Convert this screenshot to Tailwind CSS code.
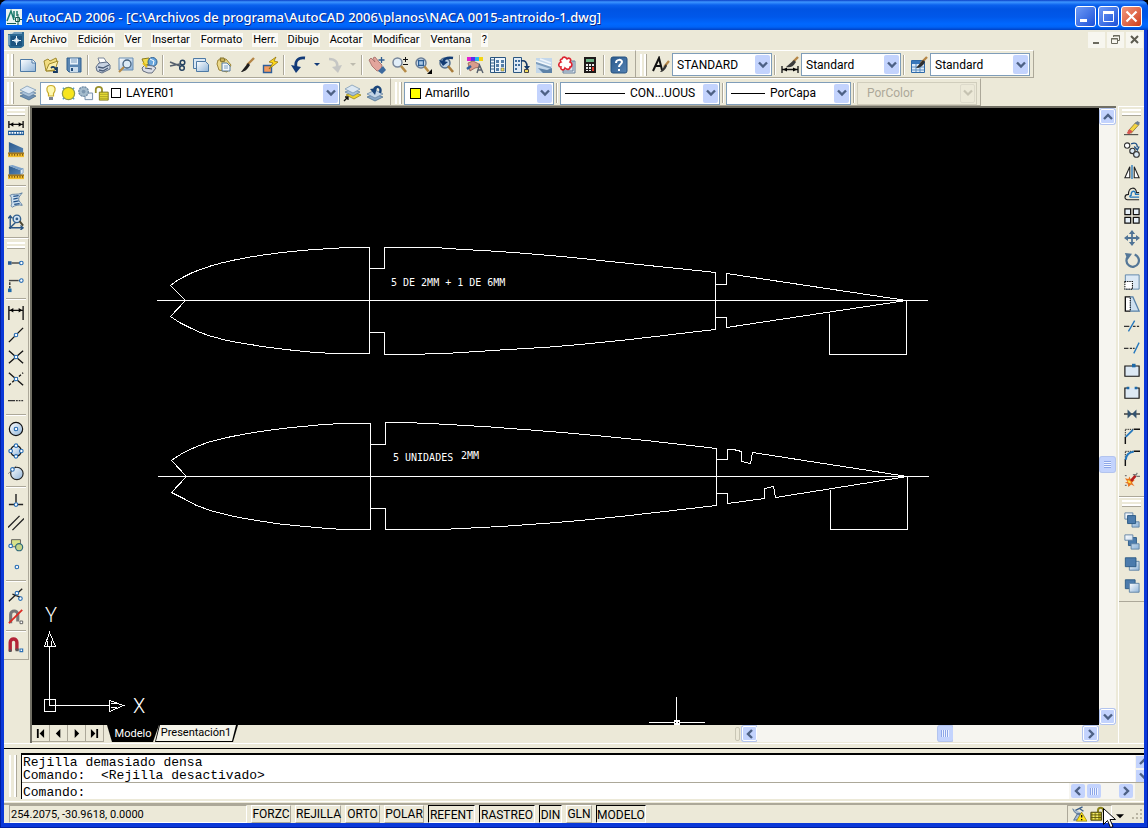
<!DOCTYPE html>
<html lang="es">
<head>
  <meta charset="UTF-8">
  <meta name="viewport" content="width=device-width, initial-scale=1.0">
  <title>AutoCAD 2006 - [C:\Archivos de programa\AutoCAD 2006\planos\NACA 0015-antroido-1.dwg]</title>
  <script src="https://cdn.jsdelivr.net/npm/@tailwindcss/browser@4"></script>
</head>
<body class="h-screen overflow-hidden bg-black font-['Roboto',sans-serif] text-xs text-black">

  <!-- Icon set, 18x18 -->
  <svg width="0" height="0" class="absolute" aria-hidden="true">
    <defs>
      <linearGradient id="sky" x1="0" y1="0" x2="1" y2="1"><stop offset="0" stop-color="#fff"/><stop offset="1" stop-color="#8fb4d8"/></linearGradient>
      <linearGradient id="steel" x1="0" y1="0" x2="1" y2="1"><stop offset="0" stop-color="#2b5a8d"/><stop offset="1" stop-color="#5583b3"/></linearGradient>
    </defs>
    <symbol id="down" viewBox="0 0 10 10"><path d="M1 2.500l4 4 4-4" fill="none" stroke="#4d6185" stroke-width="2.400"/></symbol>
    <symbol id="up" viewBox="0 0 10 10"><path d="M1 7l4-4 4 4" fill="none" stroke="#4d6185" stroke-width="2.400"/></symbol>
    <symbol id="left" viewBox="0 0 10 10"><path d="M7 1L3 5l4 4" fill="none" stroke="#4d6185" stroke-width="2.400"/></symbol>
    <symbol id="right" viewBox="0 0 10 10"><path d="M3 1l4 4-4 4" fill="none" stroke="#4d6185" stroke-width="2.400"/></symbol>
    <symbol id="off" viewBox="0 0 10 10"><path d="M1 2.500l4 4 4-4" fill="none" stroke="#c6c3b2" stroke-width="2.200"/></symbol>
    <symbol id="tri" viewBox="0 0 6 6"><path d="M0 1h6L3 4z"/></symbol>
    <symbol id="node" viewBox="0 0 6 6"><circle cx="3" cy="3" r="2" fill="#fff" stroke="#2a6fb5" stroke-width="1.300"/></symbol>

    <symbol id="new" viewBox="0 0 18 18"><path d="M1.500 3.500h12l3 3v9h-15z" fill="url(#sky)" stroke="#4e7aa5"/><path d="M13 3.500v3.500h3.500" fill="#fff" stroke="#4e7aa5"/></symbol>
    <symbol id="open" viewBox="0 0 18 18"><path d="M2 5l4-2 2 2 6-3 1 4-3 9H4z" fill="#f1dc80" stroke="#a08a2c"/><path d="M4 15l3-7 9-3-3 9z" fill="#fbeea8" stroke="#a08a2c"/><path d="M9 12c2-2 4-1 5 2M15 11v5h-4" fill="none" stroke="#173a63" stroke-width="1.800"/></symbol>
    <symbol id="save" viewBox="0 0 18 18"><path d="M2 2h14v14H4l-2-2z" fill="#5b87b3" stroke="#2f5f90"/><path d="M5 2.500h8v6H5z" fill="#e8f2fb"/><path d="M6 4h6M6 6h6" stroke="#7d9fc0"/><path d="M5 11h8v5H5z" fill="#c9dced"/><path d="M6 12h2v3H6z" fill="#234e7c"/></symbol>
    <symbol id="print" viewBox="0 0 18 18"><path d="M6 8L4 2h6l3 5" fill="#fff" stroke="#7a8699"/><path d="M2 11l3-4 8-1 3 3v4l-8 4-5-2z" fill="#c8d3e2" stroke="#5d6c84"/><path d="M4 11l5 1 6-3M5 14l4 1 5-3" fill="none" stroke="#4b5d78" stroke-width="1.300"/></symbol>
    <symbol id="preview" viewBox="0 0 18 18"><path d="M2 2h14v12H2z" fill="url(#sky)" stroke="#6a8fb4"/><circle cx="10" cy="8" r="4" fill="#dcebf7" stroke="#45627f" stroke-width="1.300"/><path d="M7 11l-5 5" stroke="#b58b4a" stroke-width="2.200"/></symbol>
    <symbol id="publish" viewBox="0 0 18 18"><path d="M2 3l7-1 3 4-7 4z" fill="#f3dc4c" stroke="#8a7b1d"/><circle cx="12.500" cy="6" r="4.500" fill="#68a6dc" stroke="#2c5f93"/><path d="M10 3l4 2-1 4" stroke="#fff" fill="none"/><path d="M2 12l3-3 8 1 3 2-4 5-4 0-5-2z" fill="#d9dde6" stroke="#666f80"/><path d="M5 12l7 1" stroke="#3f4a5c"/><path d="M3 7l4 4" stroke="#e7c21b" stroke-width="2"/></symbol>
    <symbol id="cut" viewBox="0 0 18 18"><path d="M1 6l10 4M1 10l10-2" stroke="#55606e" stroke-width="1.600"/><circle cx="13.500" cy="6.500" r="2.300" fill="none" stroke="#24405f" stroke-width="1.500"/><circle cx="13" cy="12" r="2.300" fill="none" stroke="#24405f" stroke-width="1.500"/></symbol>
    <symbol id="copy" viewBox="0 0 18 18"><path d="M1.500 2.500h12v10h-12z" fill="#dbe8f4" stroke="#4e7aa5"/><path d="M4.500 5.500h9l3 3v7h-12z" fill="url(#sky)" stroke="#4e7aa5"/></symbol>
    <symbol id="paste" viewBox="0 0 18 18"><path d="M3 4l8-1 5 6-4 7-8-2-2-6z" fill="#ecd98a" stroke="#9c8536"/><path d="M5 2h4l1 3-4 1z" fill="#c9b25a" stroke="#82702a"/><path d="M7 7h5l3 3v5H7z" fill="#f2f7fc" stroke="#54789c"/><path d="M9 10h4M9 12h4" stroke="#7fa0c0"/></symbol>
    <symbol id="brush" viewBox="0 0 18 18"><path d="M16 2L9 9" stroke="#b48546" stroke-width="2.400"/><path d="M10 7L3 16c3 0 6-2 9-7z" fill="#1d1d1d"/></symbol>
    <symbol id="block" viewBox="0 0 18 18"><path d="M2.500 9.500h8v7h-8z" fill="#f19a5f" stroke="#2d5f9b" stroke-width="1.400"/><path d="M15 1L8 6l4 1-4 6 9-7-4-1z" fill="#ffd91c" stroke="#8a6a00" stroke-width=".7"/></symbol>
    <symbol id="undo" viewBox="0 0 18 18"><path d="M15 2C7 1 5 6 6 11" fill="none" stroke="#123a78" stroke-width="2.800"/><path d="M1 9l5 8 5-6z" fill="#123a78"/></symbol>
    <symbol id="redo" viewBox="0 0 18 18"><path d="M3 3c7 0 9 4 8 8" fill="none" stroke="#c5c6c4" stroke-width="2.600"/><path d="M6 11l6 6 4-8z" fill="#c5c6c4"/></symbol>
    <symbol id="pan" viewBox="0 0 18 18"><path d="M1 4l2-2 4 4-2-4 2-1 4 5 3 3-1 5-4 1-5-5z" fill="#e2a59c" stroke="#a06662" stroke-width=".8"/><path d="M10 15l5-5 3 4-4 4z" fill="#3d6a9e"/><path d="M13.500 1v6M10.500 4h6" stroke="#2f5c90" stroke-width="1.300"/></symbol>
    <symbol id="zoomrt" viewBox="0 0 18 18"><circle cx="6.500" cy="6.500" r="4.500" fill="#e2eef8" stroke="#77869a" stroke-width="1.500"/><path d="M10 10l5 6" stroke="#b68b46" stroke-width="2.600"/><path d="M14.500 1v5M12 3.500h5M12 8.500h5" stroke="#111"/></symbol>
    <symbol id="zoomwin" viewBox="0 0 18 18"><circle cx="7" cy="7" r="5" fill="#e2eef8" stroke="#6a7d95" stroke-width="1.500"/><path d="M4.500 4.500h5v5h-5z" fill="#a9c7e4" stroke="#2b5d94" stroke-width="1.300"/><path d="M10.500 10.500l4 5" stroke="#b68b46" stroke-width="2.400"/><path d="M18 13v5h-5z"/></symbol>
    <symbol id="zoomprev" viewBox="0 0 18 18"><circle cx="8" cy="7" r="5" fill="#bfd4e8" stroke="#56718e" stroke-width="1.500"/><path d="M11 10l5 6" stroke="#a97d3c" stroke-width="2.600"/><path d="M16 2C10 1 7 3 6 6" fill="none" stroke="#133c74" stroke-width="2.400"/><path d="M2 4l4 6 5-4z" fill="#133c74"/></symbol>
    <symbol id="props" viewBox="0 0 18 18"><path d="M1 1h4v4H1z" fill="#e11fd0"/><path d="M5 1h4v4H5z" fill="#5a2ef0"/><path d="M9 1h4v4H9z" fill="#22b8e8"/><path d="M13 1h4v4h-4z" fill="#f3d512"/><path d="M2 7l5-2 6 3 1 3-5 1-5 3z" fill="#d99c8c" stroke="#895b52" stroke-width=".8"/><path d="M1 13l4-3" stroke="#2d5fa0" stroke-width="2.500"/><path d="M11 17l2.500-8L17 17M12 14h4" fill="none" stroke="#57606e" stroke-width="1.400"/></symbol>
    <symbol id="center" viewBox="0 0 18 18"><path d="M1.500 1.500h15v15h-15z" fill="#eef5fb" stroke="#2b5680"/><path d="M5.500 1.500v15" stroke="#2b5680"/><path d="M7 4h3v3H7zM12 4h3v3h-3zM7 8h3v3H7zM7 12h3v3H7zM12 8h3v3h-3z" fill="#547ea8"/><path d="M12 12h3v3h-3z" fill="#f2e159" stroke="#444" stroke-width=".5"/><path d="M2 4h3M2 7h3M2 10h3M2 13h3" stroke="#2b5680"/></symbol>
    <symbol id="palettes" viewBox="0 0 18 18"><path d="M1.500 1.500h8v15h-8z" fill="#dfeaf5" stroke="#2b5680"/><path d="M3 4h2v2H3zM6 4h2v2H6zM3 8h2v2H3zM6 8h2v2H6zM3 12h2v2H3z" fill="#3e6d9d"/><path d="M9 5c4-1 6 1 6 6" fill="none" stroke="#163a68" stroke-width="1.600"/><path d="M12 10h6l-3 4z" fill="#163a68"/><path d="M12.500 13.500h4v3h-4z" fill="#f1d95e" stroke="#444"/></symbol>
    <symbol id="sheets" viewBox="0 0 18 18"><path d="M1 2h16v15H1z" fill="#c3d7ea"/><path d="M1 5l15 5v3L1 8z" fill="#7f9fbe"/><path d="M1 5l15 5" stroke="#f3f8fc" stroke-width="1.500"/><path d="M3 12l9 2 5-2v5H8z" fill="#5d82a7"/><path d="M5 3l11 4" stroke="#eef5fb" stroke-width="1.500"/></symbol>
    <symbol id="markup" viewBox="0 0 18 18"><path d="M7 5h10v12H5v-4" fill="#dce6f0" stroke="#69809a"/><path d="M5 15h10V5" fill="none" stroke="#69809a"/><path d="M4 3c1-3 4-2 5 0 2-2 5 0 3 3 3 1 2 5 0 5 0 3-3 3-5 1-1 3-5 2-4-1-3 0-3-4 0-5-1-1-1-3 1-3z" fill="#fff" stroke="#dc2430" stroke-width="1.600"/></symbol>
    <symbol id="calc" viewBox="0 0 18 18"><path d="M3 1h12v16H3z" fill="#1e1a1a"/><path d="M5 3h8v3H5z" fill="#70b488"/><path d="M5 8h2v2H5zM8 8h2v2H8zM11 8h2v2h-2zM5 11h2v2H5zM8 11h2v2H8zM5 14h2v1H5zM8 14h2v1H8z" fill="#eee"/><path d="M11 11h2v4h-2z" fill="#e23b2e"/></symbol>
    <symbol id="help" viewBox="0 0 18 18"><rect x="1" y="1" width="16" height="16" rx="2" fill="url(#steel)" stroke="#24507f"/><path d="M6 7c0-4 6-4 6-1 0 2-3 2-3 5M9 13v2" fill="none" stroke="#fff" stroke-width="2"/></symbol>
    <symbol id="textstyle" viewBox="0 0 18 18"><path d="M1 15L7 2l3 12M4 10h5" fill="none" stroke="#111" stroke-width="2"/><path d="M17 5l-5 6" stroke="#b48546" stroke-width="2.200"/><path d="M14 8l-6 8c3 0 5-2 7-6z" fill="#333"/></symbol>
    <symbol id="dimstyle" viewBox="0 0 18 18"><path d="M1 10v7M17 10v7M1 13.500h16" stroke="#111" stroke-width="1.300"/><path d="M2 13.500l4-2v4zM16 13.500l-4-2v4z"/><path d="M17 1l-5 5" stroke="#b48546" stroke-width="2.400"/><path d="M13 4l-8 7c4 1 7 0 10-5z" fill="#3b3b3b"/></symbol>
    <symbol id="tablestyle" viewBox="0 0 18 18"><path d="M1.500 4.500h13v12h-13z" fill="#dceaf7" stroke="#2e69a8"/><path d="M2 5h12v3H2z" fill="#3877bb"/><path d="M2 11h12M2 14h12M6 8v8M10 8v8" stroke="#5a8dc2"/><path d="M17 1l-6 6" stroke="#b48546" stroke-width="2.400"/><path d="M13 4l-7 8c4 0 7-2 9-6z" fill="#2f2f2f"/></symbol>
    <symbol id="layers" viewBox="0 0 18 18"><path d="M1 12l9 4 7-4-9-3z" fill="#6d8fb3" stroke="#426789" stroke-width=".7"/><path d="M1 9l9 4 7-4-9-3z" fill="#a9c1d9" stroke="#5d7c9c" stroke-width=".7"/><path d="M1 6l9 4 7-4-9-4z" fill="#dce8f3" stroke="#7190af" stroke-width=".7"/></symbol>
    <symbol id="layercur" viewBox="0 0 18 18"><path d="M3 11l8 4 7-4-8-3z" fill="#f0d42c" stroke="#8c7b14" stroke-width=".7"/><path d="M2 8l8 4 7-4-8-3z" fill="#a9c1d9" stroke="#5d7c9c" stroke-width=".7"/><path d="M2 5l8 4 7-4-8-4z" fill="#dce8f3" stroke="#7190af" stroke-width=".7"/><path d="M1 17l4-4M2 13h3v3" fill="none" stroke="#111" stroke-width="1.300"/></symbol>
    <symbol id="layerprev" viewBox="0 0 18 18"><path d="M1 13l8 4 8-4-8-3z" fill="#8aa8c8" stroke="#426789" stroke-width=".7"/><path d="M1 10l8 4 8-4-8-4z" fill="#c3d5e7" stroke="#5d7c9c" stroke-width=".7"/><path d="M14 9c2-6-3-8-6-4" fill="none" stroke="#1b467b" stroke-width="2.400"/><path d="M4 5l5 6 2-7z" fill="#1b467b"/></symbol>
    <symbol id="bulb" viewBox="0 0 18 18"><path d="M9 1.500c5 0 5 5 2.500 8V12h-5V9.500C4 6.500 4 1.500 9 1.500z" fill="#fff9b0" stroke="#c9aa28" stroke-width="1.200"/><path d="M7 13h4v3H7z" fill="#7d8590"/></symbol>
    <symbol id="sun" viewBox="0 0 18 18"><path d="M3 3l12 12M15 3L3 15" stroke="#4e9bd4" stroke-width="1.400"/><circle cx="9" cy="9" r="6.500" fill="#f7e51d" stroke="#8f9a4a" stroke-width="1.300"/></symbol>
    <symbol id="vp" viewBox="0 0 18 18"><path d="M8.500 8.500h8v7h-8z" fill="#eef3f8" stroke="#6e8aa8"/><circle cx="7" cy="7" r="5.500" fill="#a5bccd"/><circle cx="7" cy="7" r="5" fill="none" stroke="#7690a8" stroke-width="1.500" stroke-dasharray="2 1"/><circle cx="7" cy="7" r="2" fill="#7c97b0"/></symbol>
    <symbol id="lock" viewBox="0 0 18 18"><path d="M2 9V5c0-4 7-4 7 0v4" fill="none" stroke="#98902a" stroke-width="2"/><path d="M6 8h10v9H6z" fill="#e7dc35" stroke="#79711a"/><path d="M6 10.500h10M6 13h10M6 15h10" stroke="#a09724" stroke-width=".8"/></symbol>

    <symbol id="dist" viewBox="0 0 18 18"><path d="M1 1v8M17 1v8M1 5h16" stroke="#111" stroke-width="1.500"/><path d="M2 5l4-2.500v5zM16 5l-4-2.500v5z"/><path d="M0 12h18v5H0z" fill="#1d5a97"/><path d="M1 14.500h16" stroke="#fff" stroke-width="2" stroke-dasharray="2 1"/></symbol>
    <symbol id="area" viewBox="0 0 18 18"><path d="M1 0l16 7v5H1z" fill="url(#steel)"/><path d="M0 12h18v5H0z" fill="#f0bd2c"/><path d="M0 12.500h18" stroke="#5f3e12"/><path d="M1 14.500h16" stroke="#5f3e12" stroke-width="2" stroke-dasharray="1 2"/></symbol>
    <symbol id="mass" viewBox="0 0 18 18"><path d="M1 2l13 5v5H1z" fill="url(#steel)"/><path d="M1 2l4-1 12 4-3 2z" fill="#7ba2ca"/><path d="M14 7l3-2v5l-3 2z" fill="#dce8f3" stroke="#5583b3" stroke-width=".7"/><path d="M0 12h18v5H0z" fill="#f0bd2c"/><path d="M0 12.500h18" stroke="#5f3e12"/><path d="M1 14.500h16" stroke="#5f3e12" stroke-width="2" stroke-dasharray="1 2"/></symbol>
    <symbol id="list" viewBox="0 0 18 18"><path d="M2 4c3-3 9 0 14-3-2 3-4 4-4 7s3 4 4 7c-4-1-8 0-11 2-3-1 0-3-1-6S5 6 2 4z" fill="#cfe0ef" stroke="#56799c"/><path d="M6 5l6-1M6 8l5-1M6 11l6-1M7 14l6-1" stroke="#1e4f86" stroke-width="1.400"/></symbol>
    <symbol id="idpt" viewBox="0 0 18 18"><path d="M2.500 17V3M1 15.500h15M0 5l2.500-3L5 5M14 13l3 2.500-3 2.500M3 15l6-6" fill="none" stroke="#2a5583" stroke-width="1.500"/><circle cx="10" cy="5.500" r="4.200" fill="#d5e6f5" stroke="#33618f" stroke-width="1.600"/><circle cx="10" cy="5.500" r="1.600" fill="#33618f"/><path d="M13 8l4 5" stroke="#4c4632" stroke-width="2.200"/></symbol>
    <symbol id="track" viewBox="0 0 18 18"><path d="M0 7h4v4H0z" fill="#2d5f93"/><path d="M4 9h9" stroke="#444" stroke-width="1.600"/><use href="#node" x="12" y="6" width="6" height="6"/></symbol>
    <symbol id="from" viewBox="0 0 18 18"><path d="M2 13V5" stroke="#333" stroke-width="1.600" stroke-dasharray="3 1"/><path d="M1 4h11" stroke="#444" stroke-width="1.600"/><path d="M0 13h4v4H0z" fill="#1d69a8"/><use href="#node" x="12" y="1" width="6" height="6"/></symbol>
    <symbol id="endp" viewBox="0 0 18 18"><path d="M1 1v16M17 1v16M1 6h16" stroke="#111" stroke-width="1.500"/><path d="M2 6l4-2.500v5zM16 6l-4-2.500v5z"/></symbol>
    <symbol id="mid" viewBox="0 0 18 18"><path d="M1 17L17 1" stroke="#111" stroke-width="1.500"/><use href="#node" x="6" y="6" width="6" height="6"/></symbol>
    <symbol id="inter" viewBox="0 0 18 18"><path d="M1 2l16 14M1 16L17 2" stroke="#111" stroke-width="1.500"/><use href="#node" x="6" y="6" width="6" height="6"/></symbol>
    <symbol id="appint" viewBox="0 0 18 18"><path d="M1 2l16 14" stroke="#111" stroke-width="1.500"/><path d="M1 16L17 2" stroke="#111" stroke-width="1.500" stroke-dasharray="3 2"/><use href="#node" x="6" y="6" width="6" height="6"/></symbol>
    <symbol id="ext" viewBox="0 0 18 18"><path d="M0 8.500h8M9 8.500h2M12 8.500h2M15 8.500h2" stroke="#333" stroke-width="1.500"/></symbol>
    <symbol id="cen" viewBox="0 0 18 18"><circle cx="9" cy="9" r="7.500" fill="url(#sky)" stroke="#111" stroke-width="1.300"/><use href="#node" x="6" y="6" width="6" height="6"/></symbol>
    <symbol id="quad" viewBox="0 0 18 18"><circle cx="9" cy="9" r="6" fill="url(#sky)" stroke="#111" stroke-width="1.300"/><use href="#node" x="6" y="0" width="6" height="6"/><use href="#node" x="6" y="12" width="6" height="6"/><use href="#node" x="0" y="6" width="6" height="6"/><use href="#node" x="12" y="6" width="6" height="6"/></symbol>
    <symbol id="tan" viewBox="0 0 18 18"><circle cx="10" cy="9.500" r="7" fill="url(#sky)" stroke="#222" stroke-width="1.300"/><path d="M0 10l9-9" stroke="#777"/><use href="#node" x="2" y="2" width="6" height="6"/></symbol>
    <symbol id="perp" viewBox="0 0 18 18"><path d="M9 1v10M1 13h16" stroke="#222" stroke-width="1.600"/><use href="#node" x="6" y="10" width="6" height="6"/></symbol>
    <symbol id="para" viewBox="0 0 18 18"><path d="M0 14L13 1M5 17L18 4" stroke="#222" stroke-width="1.500"/></symbol>
    <symbol id="ins" viewBox="0 0 18 18"><path d="M4 3h10v8H4z" fill="#d9e28a" stroke="#555"/><circle cx="12.500" cy="11.500" r="4" fill="#c3d389" stroke="#2e6a7a" stroke-width="1.300"/><use href="#node" x="0" y="7" width="6" height="6"/></symbol>
    <symbol id="nodept" viewBox="0 0 18 18"><use href="#node" x="7" y="6" width="6" height="6"/></symbol>
    <symbol id="near" viewBox="0 0 18 18"><path d="M1 16L16 2M5 8l10 4" stroke="#222" stroke-width="1.500"/><use href="#node" x="7" y="4" width="6" height="6"/><use href="#node" x="11" y="10" width="6" height="6"/></symbol>
    <symbol id="none" viewBox="0 0 18 18"><path d="M3 16V6c0-5 8-5 8 0v8" fill="none" stroke="#777" stroke-width="3.500"/><path d="M1 16L16 1" stroke="#dd2a22" stroke-width="2"/><path d="M13.500 13.500h3v3h-3z" fill="#fff" stroke="#555"/></symbol>
    <symbol id="magnet" viewBox="0 0 18 18"><path d="M2.500 16V6c0-5 7.500-5 7.500 0v9" fill="none" stroke="#b32336" stroke-width="3.800"/><path d="M1 14h3v3H1zM8.500 13h3.500v3H8.500z" fill="#555"/><path d="M13.500 13.500h3v3h-3z" fill="#fff" stroke="#2a6fb5" stroke-width="1.300"/></symbol>

    <symbol id="erase" viewBox="0 0 18 18"><path d="M0 16.500h16" stroke="#222"/><path d="M5 12L13 3l4 2-9 10z" fill="#f4d543" stroke="#77652a" stroke-width=".8"/><path d="M3 15l3-5 4 3-4 3z" fill="#d85852"/><path d="M12 4l3-3 3 2-2 3z" fill="#6c7f96"/></symbol>
    <symbol id="cp" viewBox="0 0 18 18"><circle cx="3.500" cy="4" r="3" fill="#fff" stroke="#333" stroke-width="1.300"/><circle cx="9.500" cy="10" r="3" fill="#dce9f4" stroke="#333" stroke-width="1.300"/><circle cx="14" cy="14" r="3.200" fill="#dce9f4" stroke="#333" stroke-width="1.300"/><path d="M8 2c5-2 7 0 7 4M11.500 5l3.500 4 2-4" fill="none" stroke="#1c4f86" stroke-width="1.500"/></symbol>
    <symbol id="mirror" viewBox="0 0 18 18"><path d="M6.500 3v12.500H1z" fill="#fff" stroke="#222" stroke-width="1.200"/><path d="M11.500 3v12.500H17z" fill="#fff" stroke="#222" stroke-width="1.200"/><path d="M9 1v16" stroke="#2377bd" stroke-width="1.500"/></symbol>
    <symbol id="offset" viewBox="0 0 18 18"><path d="M17 15.500H4c-4 0-4-6 1-6 0-9 9-9 9-2h3" fill="none" stroke="#222" stroke-width="1.300"/><path d="M17 12.500H7c-1-1 0-2 1-2 0-6 5-6 5-1h4" fill="none" stroke="#2377bd" stroke-width="1.500"/></symbol>
    <symbol id="array" viewBox="0 0 18 18"><path d="M1 1h6.500v6.500H1zM10.500 1H17v6.500h-6.500zM1 10.500h6.500V17H1zM10.500 10.500H17V17h-6.500z" fill="#e6f0f8" stroke="#111" stroke-width="1.400"/></symbol>
    <symbol id="move" viewBox="0 0 18 18"><path d="M9 2v14M2 9h14" stroke="#4f7395" stroke-width="2"/><path d="M9 0l3.500 4.500h-7zM9 18l3.500-4.500h-7zM0 9l4.500-3.500v7zM18 9l-4.500-3.500v7z" fill="#4f7395"/></symbol>
    <symbol id="rotate" viewBox="0 0 18 18"><path d="M5 4.500A7 7 0 1 0 12 3" fill="none" stroke="#547797" stroke-width="2.500"/><path d="M1 1l8 1-5 7z" fill="#547797"/></symbol>
    <symbol id="scale" viewBox="0 0 18 18"><path d="M1.500 1h15.500v16H1.500z" fill="#dce9f5" stroke="#5580a8"/><path d="M1 8.500h8.500V17H1z" fill="#fff" stroke="#111" stroke-width="1.200" stroke-dasharray="1.500 1"/></symbol>
    <symbol id="stretch" viewBox="0 0 18 18"><path d="M7 1h3l7 16H7z" fill="#cfe0ef" stroke="#5580a8" stroke-width="1.400"/><path d="M7 1H1.500v16H7" fill="#fff" stroke="#111" stroke-width="1.500"/><path d="M7 2v15" stroke="#111" stroke-width="1.200" stroke-dasharray="1.500 1"/></symbol>
    <symbol id="trim" viewBox="0 0 18 18"><path d="M0 9.500h6M10 9.500h3M14.500 9.500H17" stroke="#333" stroke-width="1.500"/><path d="M5 15L12 3" stroke="#2377bd" stroke-width="1.500"/></symbol>
    <symbol id="extend" viewBox="0 0 18 18"><path d="M0 9.500h5M6.500 9.500H9M10 9.500h2" stroke="#333" stroke-width="1.500"/><path d="M11 15L17 3" stroke="#2377bd" stroke-width="1.500"/></symbol>
    <symbol id="break1" viewBox="0 0 18 18"><path d="M1 4.500h16V16H1z" fill="#dde9f4" stroke="#111" stroke-width="1.300"/><path d="M9 2h4v4H9z" fill="#1d69a8"/></symbol>
    <symbol id="break2" viewBox="0 0 18 18"><path d="M5 4.500H1V16h16V4.500h-4" fill="#dde9f4" stroke="#111" stroke-width="1.300"/><path d="M3 3h3v3H3zM12 3h3v3h-3z" fill="#1d69a8"/></symbol>
    <symbol id="join" viewBox="0 0 18 18"><path d="M0 9h18" stroke="#333" stroke-width="1.600"/><path d="M4 4l5 5-5 5zM14 4L9 9l5 5z" fill="#33536f"/></symbol>
    <symbol id="chamfer" viewBox="0 0 18 18"><path d="M1.500 1.500h10M1.500 2v8" stroke="#111" stroke-dasharray="1.500 1"/><path d="M11 1.500h7M1.500 10v8" stroke="#111" stroke-width="1.600"/><path d="M2 10l8-8" stroke="#2377bd" stroke-width="2"/></symbol>
    <symbol id="fillet" viewBox="0 0 18 18"><path d="M1.500 1.500h10M1.500 2v8" stroke="#111" stroke-dasharray="1.500 1"/><path d="M11 1.500h7M1.500 10v8" stroke="#111" stroke-width="1.600"/><path d="M2 11c0-5 4-9 9-9" fill="none" stroke="#2377bd" stroke-width="2.400"/></symbol>
    <symbol id="explode" viewBox="0 0 18 18"><path d="M1 7l4 1 1-3 2 4 4 0-3 3 3 4-4-2-3 3-1-4-3-1 3-1z" fill="#e8731e"/><path d="M4 9l3 1 1 3-3-1z" fill="#ffe34a"/><path d="M8 10l5-6" stroke="#b51f1f" stroke-width="3"/><path d="M13 4l2-3M14 5h4M10 3h3M1 4h2M1 15h2" stroke="#777" stroke-width="1.300"/></symbol>
    <symbol id="front" viewBox="0 0 18 18"><path d="M1 1h9v7H1zM9 11h8v6H9z" fill="url(#sky)" stroke="#5a7fa3"/><path d="M4 4h9v9H4z" fill="#4b7bac" stroke="#285782"/></symbol>
    <symbol id="back" viewBox="0 0 18 18"><path d="M5 4h9v9H5z" fill="#4b7bac" stroke="#285782"/><path d="M1 1h9v6H1zM8 11h9v6H8z" fill="url(#sky)" stroke="#5a7fa3"/></symbol>
    <symbol id="above" viewBox="0 0 18 18"><path d="M6 6h11v10H6z" fill="url(#sky)" stroke="#5a7fa3"/><path d="M1.500 2h12v10h-12z" fill="#4b7bac" stroke="#285782"/></symbol>
    <symbol id="under" viewBox="0 0 18 18"><path d="M1.500 2h11v10h-11z" fill="#4b7bac" stroke="#285782"/><path d="M6 6h11v10H6z" fill="url(#sky)" stroke="#5a7fa3"/></symbol>
    <symbol id="comm" viewBox="0 0 18 18"><path d="M2 3c2 6 6 7 10 5M3 16l4-7h3l2 6z" fill="#a9bcd2" stroke="#466487"/><path d="M5 5l8-4M10 3l4 3" stroke="#3b5f8b" stroke-width="1.500"/><path d="M12 7l6 10H6z" fill="#ffe41c" stroke="#8a7a0c" stroke-width=".8"/><path d="M12 10v3M12 14.500V16" stroke="#111" stroke-width="1.500"/></symbol>
    <symbol id="padlock" viewBox="0 0 18 18"><path d="M9 7V5c0-4 6-4 6 0v2" fill="none" stroke="#8b8418" stroke-width="2.200"/><path d="M1 7h12v9H1z" fill="#b3a91e" stroke="#3f3b08"/><path d="M4 8v7M8 8v7" stroke="#f5ee7c" stroke-width="2"/><path d="M1 10h12M1 13h12" stroke="#544f0d"/></symbol>
  </svg>

  <div class="flex h-full flex-col rounded-t-lg bg-[#0a38d8] px-1 pb-[5px] shadow-[inset_1px_-1px_0_#001ea0,inset_-1px_-1px_0_#001ea0]">

    <!-- Title bar -->
    <header class="-mx-1 flex h-[30px] shrink-0 items-center rounded-t-lg bg-[linear-gradient(#0a3fc8_0,#3d95ff_2px,#0b62ee_5px,#0054e3_9px,#0058ea_17px,#0068ff_24px,#0063f6_27px,#0041c4_30px)] pt-[3px] pr-[6px] pl-[6px]">
      <svg class="size-4 shrink-0" viewBox="0 0 16 16"><path d="M0 0h16v16H0z" fill="#e9f3f1"/><path d="M1 12L5 2l3 9M8 2v7M11 2v5" fill="none" stroke="#1b7a6c" stroke-width="1.500"/><path d="M9.500 8.500h4v4h-4zM12 5v11M1 14.500h9M13 10.500h3" fill="none" stroke="#145a50"/></svg>
      <h1 class="ml-1 flex-1 truncate font-['Noto_Sans',sans-serif] text-[13px] leading-5 font-medium text-white [text-shadow:1px_1px_#0a2a8a]">AutoCAD 2006 - [C:\Archivos de programa\AutoCAD 2006\planos\NACA 0015-antroido-1.dwg]</h1>
      <div class="flex gap-[2px] [&>button]:size-[21px] [&>button]:rounded-[3px] [&>button]:border [&>button]:border-white [&_svg]:size-full">
        <button aria-label="Minimizar" class="bg-linear-to-br from-[#6f9af5] to-[#1c4fd8]"><svg viewBox="0 0 19 19"><path d="M4 12h7v3H4z" fill="#fff"/></svg></button>
        <button aria-label="Maximizar" class="bg-linear-to-br from-[#6f9af5] to-[#1c4fd8]"><svg viewBox="0 0 19 19"><path d="M4.500 5.500h10v9h-10z" fill="none" stroke="#fff"/><path d="M4 4h11v3H4z" fill="#fff"/></svg></button>
        <button aria-label="Cerrar" class="bg-linear-to-br from-[#f0967c] to-[#cf3a12]"><svg viewBox="0 0 19 19"><path d="M4.500 4.500l10 10M14.500 4.500l-10 10" stroke="#fff" stroke-width="2.200"/></svg></button>
      </div>
    </header>

    <div class="flex min-h-0 flex-1 flex-col bg-[#ece9d8]">

      <!-- Menu bar -->
      <nav class="flex h-5 shrink-0 items-center pb-px pl-1">
        <svg class="mr-[5px] size-4" viewBox="0 0 16 16"><path d="M0 2h4l2-2h10v14l-3 2H2L0 13z" fill="#2c6a93"/><path d="M3 4h11v10H3z" fill="#1c5480"/><path d="M8.500 4v9M4 8.500h9M7 7h3v3H7z" stroke="#eaf4fb" fill="none"/><path d="M1 3v10M2 1h12" stroke="#b6d2e5"/></svg>
        <div class="flex gap-[9px] text-[11px] leading-[14px] [&>button]:bg-[#fbfaf5] [&>button]:px-px">
          <button>Archivo</button><button>Edición</button><button>Ver</button><button>Insertar</button><button>Formato</button><button>Herr.</button><button>Dibujo</button><button>Acotar</button><button>Modificar</button><button>Ventana</button><button>?</button>
        </div>
        <div class="ml-auto flex gap-[2px] pr-[1px] [&>button]:h-4 [&>button]:w-[17px] [&>button]:bg-[#f7f6ef] [&_svg]:mx-auto [&_svg]:size-[11px]">
          <button aria-label="Minimizar dibujo"><svg viewBox="0 0 11 11"><path d="M2 8h6v2H2z" fill="#6b6a5e"/></svg></button>
          <button aria-label="Restaurar dibujo"><svg viewBox="0 0 11 11"><path d="M3.500 3V1.500h6v5H8M1.500 4.500h6v5h-6zM1 5h7M3 2h7" fill="none" stroke="#6b6a5e"/></svg></button>
          <button aria-label="Cerrar dibujo"><svg viewBox="0 0 11 11"><path d="M2 2l7 7M9 2l-7 7" stroke="#5c5b50" stroke-width="2"/></svg></button>
        </div>
      </nav>

      <!-- Standard and styles toolbars -->
      <div class="flex h-[28px] shrink-0">
        <div class="flex items-center border-t border-r border-b border-t-white border-r-[#aca899] border-b-[#aca899] pt-px pr-[5px] [&>button]:h-[23px] [&>button]:w-[23px] [&>button>svg]:mx-auto [&>button>svg]:size-[18px] [&>i]:mx-[2px] [&>i]:h-5 [&>i]:w-[2px] [&>i]:border-l [&>i]:border-[#aca899] [&>i]:bg-white">
          <div class="mr-[3px] ml-[3px] h-[22px] w-[6px] border-x-2 border-white shadow-[1px_0_#aca899]"></div>
          <button title="Nuevo"><svg><use href="#new"/></svg></button>
          <button title="Abrir"><svg><use href="#open"/></svg></button>
          <button title="Guardar"><svg><use href="#save"/></svg></button>
          <i></i>
          <button title="Imprimir"><svg><use href="#print"/></svg></button>
          <button title="Vista preliminar"><svg><use href="#preview"/></svg></button>
          <button title="Publicar"><svg><use href="#publish"/></svg></button>
          <i></i>
          <button title="Cortar"><svg><use href="#cut"/></svg></button>
          <button title="Copiar"><svg><use href="#copy"/></svg></button>
          <button title="Pegar"><svg><use href="#paste"/></svg></button>
          <button title="Igualar propiedades"><svg><use href="#brush"/></svg></button>
          <button title="Editor de bloques"><svg><use href="#block"/></svg></button>
          <i></i>
          <button title="Deshacer"><svg><use href="#undo"/></svg></button>
          <span class="flex w-[13px] justify-center text-[#123a78]"><svg class="size-[6px] fill-current"><use href="#tri"/></svg></span>
          <button title="Rehacer"><svg><use href="#redo"/></svg></button>
          <span class="flex w-[13px] justify-center text-[#bdbbae]"><svg class="size-[6px] fill-current"><use href="#tri"/></svg></span>
          <i></i>
          <button title="Encuadre"><svg><use href="#pan"/></svg></button>
          <button title="Zoom tiempo real"><svg><use href="#zoomrt"/></svg></button>
          <button title="Zoom ventana"><svg><use href="#zoomwin"/></svg></button>
          <button title="Zoom previo"><svg><use href="#zoomprev"/></svg></button>
          <i></i>
          <button title="Propiedades"><svg><use href="#props"/></svg></button>
          <button title="DesignCenter"><svg><use href="#center"/></svg></button>
          <button title="Paletas"><svg><use href="#palettes"/></svg></button>
          <button title="Conjuntos de planos"><svg><use href="#sheets"/></svg></button>
          <button title="Marcas"><svg><use href="#markup"/></svg></button>
          <button title="Calculadora"><svg><use href="#calc"/></svg></button>
          <i></i>
          <button title="Ayuda"><svg><use href="#help"/></svg></button>
        </div>
        <div class="flex items-center border-t border-r border-b border-t-white border-r-[#aca899] border-b-[#aca899] pt-px pr-[3px] [&>button]:h-[23px] [&>button]:w-[23px] [&>button>svg]:mx-auto [&>button>svg]:size-[18px] [&>i]:mx-[2px] [&>i]:h-5 [&>i]:w-[2px] [&>i]:border-l [&>i]:border-[#aca899] [&>i]:bg-white">
          <div class="mr-[3px] ml-[4px] h-[22px] w-[6px] border-x-2 border-white shadow-[1px_0_#aca899]"></div>
          <button title="Estilo de texto"><svg><use href="#textstyle"/></svg></button>
          <label class="flex h-[23px] w-[100px] items-center border border-[#7f9db9] bg-white p-px">
            <select aria-label="Estilo de texto" class="min-w-0 flex-1 appearance-none pl-[3px] outline-none"><option>STANDARD</option></select>
            <span class="grid h-full w-[15px] place-items-center rounded-xs bg-[#c3d3fd]"><svg class="size-[10px]"><use href="#down"/></svg></span>
          </label>
          <i></i>
          <button title="Estilo de cota"><svg><use href="#dimstyle"/></svg></button>
          <label class="flex h-[23px] w-[100px] items-center border border-[#7f9db9] bg-white p-px">
            <select aria-label="Estilo de cota" class="min-w-0 flex-1 appearance-none pl-[3px] outline-none"><option>Standard</option></select>
            <span class="grid h-full w-[15px] place-items-center rounded-xs bg-[#c3d3fd]"><svg class="size-[10px]"><use href="#down"/></svg></span>
          </label>
          <i></i>
          <button title="Estilo de tabla"><svg><use href="#tablestyle"/></svg></button>
          <label class="flex h-[23px] w-[100px] items-center border border-[#7f9db9] bg-white p-px">
            <select aria-label="Estilo de tabla" class="min-w-0 flex-1 appearance-none pl-[3px] outline-none"><option>Standard</option></select>
            <span class="grid h-full w-[15px] place-items-center rounded-xs bg-[#c3d3fd]"><svg class="size-[10px]"><use href="#down"/></svg></span>
          </label>
        </div>
      </div>

      <!-- Layers and properties toolbars -->
      <div class="flex h-[28px] shrink-0">
        <div class="flex items-center border-t border-r border-b border-t-white border-r-[#aca899] border-b-[#aca899] pt-[2px] pr-[4px] [&>button]:h-[23px] [&>button]:w-[23px] [&>button>svg]:mx-auto [&>button>svg]:size-[18px]">
          <div class="mr-[3px] ml-[3px] h-[22px] w-[6px] border-x-2 border-white shadow-[1px_0_#aca899]"></div>
          <button title="Capas"><svg><use href="#layers"/></svg></button>
          <label class="ml-[1px] flex h-[23px] w-[300px] items-center border border-[#7f9db9] bg-white p-px">
            <svg class="size-[18px]"><use href="#bulb"/></svg>
            <svg class="size-[17px]"><use href="#sun"/></svg>
            <svg class="size-[17px]"><use href="#vp"/></svg>
            <svg class="size-[16px]"><use href="#lock"/></svg>
            <span class="mx-px size-[10px] border border-black"></span>
            <select aria-label="Capa" class="min-w-0 flex-1 appearance-none pl-[4px] outline-none"><option>LAYER01</option></select>
            <span class="grid h-full w-[15px] place-items-center rounded-xs bg-[#c3d3fd]"><svg class="size-[10px]"><use href="#down"/></svg></span>
          </label>
          <button title="Capa del objeto"><svg><use href="#layercur"/></svg></button>
          <button title="Capa previa"><svg><use href="#layerprev"/></svg></button>
        </div>
        <div class="flex items-center border-t border-r border-b border-t-white border-r-[#aca899] border-b-[#aca899] pt-[2px] pr-[3px] [&>i]:mx-[2px] [&>i]:h-5 [&>i]:w-[2px] [&>i]:border-l [&>i]:border-[#aca899] [&>i]:bg-white">
          <div class="mr-[3px] ml-[4px] h-[22px] w-[6px] border-x-2 border-white shadow-[1px_0_#aca899]"></div>
          <label class="flex h-[23px] w-[150px] items-center border border-[#7f9db9] bg-white p-px">
            <span class="ml-1 size-[11px] border border-black bg-[#ff0]"></span>
            <select aria-label="Color" class="min-w-0 flex-1 appearance-none pl-[4px] outline-none"><option>Amarillo</option></select>
            <span class="grid h-full w-[15px] place-items-center rounded-xs bg-[#c3d3fd]"><svg class="size-[10px]"><use href="#down"/></svg></span>
          </label>
          <i></i>
          <label class="flex h-[23px] w-[160px] items-center border border-[#7f9db9] bg-white p-px">
            <span class="ml-[3px] h-px w-[60px] bg-black"></span>
            <select aria-label="Tipo de línea" class="min-w-0 flex-1 appearance-none pl-[5px] outline-none"><option>CON...UOUS</option></select>
            <span class="grid h-full w-[15px] place-items-center rounded-xs bg-[#c3d3fd]"><svg class="size-[10px]"><use href="#down"/></svg></span>
          </label>
          <i></i>
          <label class="flex h-[23px] w-[125px] items-center border border-[#7f9db9] bg-white p-px">
            <span class="ml-[3px] h-px w-[34px] bg-black"></span>
            <select aria-label="Grosor de línea" class="min-w-0 flex-1 appearance-none pl-[5px] outline-none"><option>PorCapa</option></select>
            <span class="grid h-full w-[15px] place-items-center rounded-xs bg-[#c3d3fd]"><svg class="size-[10px]"><use href="#down"/></svg></span>
          </label>
          <i></i>
          <label class="flex h-[23px] w-[120px] items-center border border-[#d0cdbc] p-px text-[#aca899]">
            <select aria-label="Estilo de trazado" disabled class="min-w-0 flex-1 appearance-none pl-[8px] opacity-100"><option>PorColor</option></select>
            <span class="grid h-full w-[15px] place-items-center rounded-xs border border-[#dddacb]"><svg class="size-[10px]"><use href="#off"/></svg></span>
          </label>
        </div>
      </div>

      <main class="flex min-h-0 flex-1">

        <!-- Inquiry and object snap toolbars -->
        <aside class="w-[25px] shrink-0 [&_button]:block [&_button]:h-[22px] [&_button]:w-full [&_button>svg]:mx-auto [&_button>svg]:size-[16px] [&_hr]:mx-[2px] [&_hr]:my-[2px] [&_hr]:h-[2px] [&_hr]:border-t-[#aca899] [&_hr]:bg-white">
          <div class="border-t border-r border-b border-t-white border-r-[#aca899] border-b-[#aca899] pb-[4px]">
            <div class="mx-[3px] mt-[2px] mb-[2px] h-[6px] border-y-2 border-white shadow-[0_1px_#aca899]"></div>
            <button title="Distancia"><svg><use href="#dist"/></svg></button>
            <button title="Área"><svg><use href="#area"/></svg></button>
            <button title="Propiedades físicas"><svg><use href="#mass"/></svg></button>
            <hr>
            <button title="Lista"><svg><use href="#list"/></svg></button>
            <button title="Identificar punto"><svg><use href="#idpt"/></svg></button>
          </div>
          <div class="border-t border-r border-b border-t-white border-r-[#aca899] border-b-[#aca899] pb-[3px]">
            <div class="mx-[3px] mt-[3px] mb-[4px] h-[6px] border-y-2 border-white shadow-[0_1px_#aca899]"></div>
            <button title="Punto de rastreo"><svg><use href="#track"/></svg></button>
            <button title="Desde"><svg><use href="#from"/></svg></button>
            <hr>
            <button title="Punto final"><svg><use href="#endp"/></svg></button>
            <button title="Punto medio"><svg><use href="#mid"/></svg></button>
            <button title="Intersección"><svg><use href="#inter"/></svg></button>
            <button title="Intersección ficticia"><svg><use href="#appint"/></svg></button>
            <button title="Extensión"><svg><use href="#ext"/></svg></button>
            <hr>
            <button title="Centro"><svg><use href="#cen"/></svg></button>
            <button title="Cuadrante"><svg><use href="#quad"/></svg></button>
            <button title="Tangente"><svg><use href="#tan"/></svg></button>
            <hr>
            <button title="Perpendicular"><svg><use href="#perp"/></svg></button>
            <button title="Paralelo"><svg><use href="#para"/></svg></button>
            <button title="Inserción"><svg><use href="#ins"/></svg></button>
            <button title="Punto"><svg><use href="#nodept"/></svg></button>
            <hr>
            <button title="Cercano"><svg><use href="#near"/></svg></button>
            <button title="Ninguno"><svg><use href="#none"/></svg></button>
            <hr>
            <button title="Parámetros de referencia"><svg><use href="#magnet"/></svg></button>
          </div>
        </aside>

        <!-- Drawing window -->
        <section class="ml-[1px] flex min-w-0 flex-1 flex-col border-t-2 border-l-2 border-t-[#716f64] border-l-[#716f64]">
          <div class="flex min-h-0 flex-1">
            <svg class="min-h-0 min-w-0 flex-1 bg-black" viewBox="32 108 1067 617" preserveAspectRatio="xMinYMax slice">
              <g transform="translate(.5 .5)" fill="none" stroke="#fff" shape-rendering="crispEdges">
                <!-- first profile -->
                <path d="M156 300H927"/>
                <path d="M170 285L185 300L170 316"/>
                <path d="M170 285L176 280.500L183 276.500L191 272.500L200 269L210 265.500L220 262.700L235 259.300L250 256.500L264 254.300L278 252.500L294 250.700L310 249.300L330 248L347 247H369V353H346L330 352.800L315 352L296 350.200L277 348L263 346.200L250 344L237 342L225 339.700L208 335L198 331.200L189 327L179 322L170 316"/>
                <path d="M369 268H384V247H435L450 248.200L464 249L490 250.500L513 252L550 255L575 257.300L600 260L650 265.200L690 269.300L715 272V329L690 331.800L655 336L620 340L585 343.500L550 346.500L500 349.500L445 353L405 354H384V332H369"/>
                <path d="M715 284H726V273L906 300L726 327V317H715"/>
                <path d="M829 313V354H906V300"/>
                <!-- second profile -->
                <path d="M157 476H928"/>
                <path d="M171 460L186 476L171 492"/>
                <path d="M171 460L176 456.500L183 452.200L194 447L207 442L218 439L230 436.300L247 433L265 430.300L282 428L300 426.200L318 424.500L336 423.300L345 423H370V529H347L331 528.300L316 527L297 525.300L278 523.300L264 521.200L250 519L237 516.700L225 514L210 510L196 505L184 498.500L171 492"/>
                <path d="M370 444H385V422H401L425 422.800L448 424L490 426.500L530 429.500L570 432.700L600 435.500L650 440.500L690 445L716 448V505L690 508L655 512L620 516L585 519.500L550 522.500L500 526L441 529H385V508H370"/>
                <path d="M716 459H727V449H733L741 451V461L750 463L752 452L907 476L775 497L773 486L764 488V498L727 503V493H716"/>
                <path d="M830 489V529H907V476"/>
                <!-- UCS icon -->
                <path d="M44 699H55V711H44zM49 705V646M49 705H109M44 646L49 632L55 646zM47 640V646M51 640V646M109 700V711L123 705zM110 703H116M110 707H116"/>
                <!-- crosshair -->
                <path d="M676 696V719M648 722H673M679 722H704M674 720H679V724H674zM674 720L679 724M679 720L674 724"/>
              </g>
              <g class="fill-white font-['DejaVu_Sans_Mono',monospace] text-[10px]">
                <text x="391" y="286">5 DE 2MM + 1 DE 6MM</text>
                <text x="393" y="461">5 UNIDADES</text>
                <text x="461" y="459">2MM</text>
              </g>
              <g class="fill-white font-['Roboto',sans-serif] text-[20px] font-light">
                <text x="45" y="622">Y</text>
                <text x="133" y="713">X</text>
              </g>
            </svg>
            <div class="flex w-[17px] shrink-0 flex-col items-center bg-[#f6f5f0] [&>button]:grid [&>button]:size-[15px] [&>button]:shrink-0 [&>button]:place-items-center [&>button]:rounded-xs [&>button]:border [&>button]:border-white [&>button]:bg-[#c3d3fd] [&>button]:shadow-[0_0_0_1px_#b3c4ee]">
              <button aria-label="Subir" class="mt-px"><svg class="size-[10px]"><use href="#up"/></svg></button>
              <div class="flex-[332]"></div>
              <div class="grid size-[15px] place-items-center rounded-xs bg-[#c3d3fd] shadow-[0_0_0_1px_#b3c4ee]"><span class="h-[7px] w-[7px] bg-[repeating-linear-gradient(#8ca6e8_0_1px,#eef3ff_1px_2px)]"></span></div>
              <div class="flex-[236]"></div>
              <button aria-label="Bajar" class="mb-px"><svg class="size-[10px]"><use href="#down"/></svg></button>
            </div>
          </div>

          <!-- Layout tabs and horizontal scroll -->
          <div class="flex h-[18px] shrink-0 pb-px">
            <div class="flex [&>button]:w-[18px] [&>button]:border-r [&>button]:border-b [&>button]:border-[#aca899] [&_svg]:mx-auto [&_svg]:size-[9px]">
              <button aria-label="Primera"><svg viewBox="0 0 10 10"><path d="M1 0h2v10H1zM9 0v10L4 5z"/></svg></button>
              <button aria-label="Anterior"><svg viewBox="0 0 10 10"><path d="M7 0v10L2 5z"/></svg></button>
              <button aria-label="Siguiente"><svg viewBox="0 0 10 10"><path d="M3 0v10l5-5z"/></svg></button>
              <button aria-label="Última"><svg viewBox="0 0 10 10"><path d="M7 0h2v10H7zM1 0v10l5-5z"/></svg></button>
            </div>
            <div class="flex text-[11px] leading-4">
              <button class="ml-[3px] w-[52px] bg-black text-white [clip-path:polygon(0_0,100%_0,46px_100%,5px_100%)]">Modelo</button>
              <button class="-ml-[5px] w-[84px] bg-black pb-px [clip-path:polygon(5px_0,100%_0,79px_100%,1px_100%)]"><span class="block h-full bg-[#f5f4ea] [clip-path:polygon(6px_0,82px_0,78px_100%,2px_100%)]">Presentación1</span></button>
            </div>
            <div class="ml-auto flex w-[381px] items-center [&>button]:grid [&>button]:size-[15px] [&>button]:shrink-0 [&>button]:place-items-center [&>button]:rounded-xs [&>button]:border [&>button]:border-white [&>button]:bg-[#c3d3fd] [&>button]:shadow-[0_0_0_1px_#b3c4ee]">
              <span class="mr-[2px] h-[14px] w-[5px] rounded-xs border border-[#c9c6b5]"></span>
              <button aria-label="Izquierda"><svg class="size-[10px]"><use href="#left"/></svg></button>
              <div class="h-full flex-[180] bg-[#f6f5f0]"></div>
              <div class="grid size-[15px] place-items-center rounded-xs bg-[#c3d3fd] shadow-[0_0_0_1px_#b3c4ee]"><span class="h-[7px] w-[8px] bg-[repeating-linear-gradient(90deg,#8ca6e8_0_1px,#eef3ff_1px_2px)]"></span></div>
              <div class="h-full flex-[130] bg-[#f6f5f0]"></div>
              <button aria-label="Derecha" class="mr-[18px]"><svg class="size-[10px]"><use href="#right"/></svg></button>
            </div>
          </div>
        </section>

        <!-- Modify and draw order toolbars -->
        <aside class="ml-[2px] w-[26px] shrink-0 border-l border-white [&_button]:block [&_button]:h-[22px] [&_button]:w-full [&_button>svg]:mx-auto [&_button>svg]:size-[16px]">
          <div class="border-t border-b border-t-white border-b-[#aca899] pb-[5px]">
            <div class="mx-[3px] mt-[2px] mb-[2px] h-[6px] border-y-2 border-white shadow-[0_1px_#aca899]"></div>
            <button title="Borrar"><svg><use href="#erase"/></svg></button>
            <button title="Copiar"><svg><use href="#cp"/></svg></button>
            <button title="Simetría"><svg><use href="#mirror"/></svg></button>
            <button title="Desfase"><svg><use href="#offset"/></svg></button>
            <button title="Matriz"><svg><use href="#array"/></svg></button>
            <button title="Desplazar"><svg><use href="#move"/></svg></button>
            <button title="Girar"><svg><use href="#rotate"/></svg></button>
            <button title="Escala"><svg><use href="#scale"/></svg></button>
            <button title="Estirar"><svg><use href="#stretch"/></svg></button>
            <button title="Recortar"><svg><use href="#trim"/></svg></button>
            <button title="Alargar"><svg><use href="#extend"/></svg></button>
            <button title="Partir en punto"><svg><use href="#break1"/></svg></button>
            <button title="Partir"><svg><use href="#break2"/></svg></button>
            <button title="Unir"><svg><use href="#join"/></svg></button>
            <button title="Chaflán"><svg><use href="#chamfer"/></svg></button>
            <button title="Empalme"><svg><use href="#fillet"/></svg></button>
            <button title="Descomponer"><svg><use href="#explode"/></svg></button>
          </div>
          <div class="border-t border-b border-t-white border-b-[#aca899] pb-[4px]">
            <div class="mx-[3px] mt-[2px] mb-[3px] h-[6px] border-y-2 border-white shadow-[0_1px_#aca899]"></div>
            <button title="Traer al frente"><svg><use href="#front"/></svg></button>
            <button title="Enviar detrás"><svg><use href="#back"/></svg></button>
            <button title="Por encima"><svg><use href="#above"/></svg></button>
            <button title="Por debajo"><svg><use href="#under"/></svg></button>
          </div>
        </aside>
      </main>

      <!-- Command window -->
      <section class="shrink-0 border-t border-white pt-[4px]">
        <div class="flex border-t border-black pt-[4px]">
          <div class="mx-[5px] h-[42px] w-[7px] self-center border-x-2 border-white shadow-[1px_0_#aca899]"></div>
          <div class="flex min-w-0 flex-1 flex-col border-t-2 border-l border-black font-['Liberation_Mono',monospace] text-[13px] leading-[13px]">
            <div class="flex overflow-hidden bg-white">
              <div class="flex-1 pt-px pl-px whitespace-pre">Rejilla demasiado densa
Comando:  &lt;Rejilla desactivado&gt;</div>
              <div class="flex w-[9px] flex-col gap-[2px] overflow-hidden bg-[#f6f5f0] pt-px pl-px [&>button]:grid [&>button]:h-3 [&>button]:w-[15px] [&>button]:shrink-0 [&>button]:place-items-center [&>button]:bg-[#c3d3fd]">
                <button aria-label="Historial arriba"><svg class="size-[10px]"><use href="#up"/></svg></button>
                <button aria-label="Historial abajo"><svg class="size-[10px]"><use href="#down"/></svg></button>
              </div>
            </div>
            <div class="flex h-[17px] border-t border-[#aca899] bg-white">
              <label for="cmd" class="pt-[3px] pl-px">Comando:</label>
              <input id="cmd" type="text" class="min-w-0 flex-1 pl-2 outline-none">
              <div class="flex w-[75px] items-center bg-[#f6f5f0] pl-[2px] [&>button]:grid [&>button]:size-[14px] [&>button]:place-items-center [&>button]:rounded-xs [&>button]:bg-[#c3d3fd]">
                <button aria-label="Izquierda"><svg class="size-[10px]"><use href="#left"/></svg></button>
                <div class="ml-[2px] grid size-[14px] place-items-center rounded-xs bg-[#c3d3fd]"><span class="h-[7px] w-[8px] bg-[repeating-linear-gradient(90deg,#8ca6e8_0_1px,#eef3ff_1px_2px)]"></span></div>
                <button aria-label="Derecha" class="ml-auto"><svg class="size-[10px]"><use href="#right"/></svg></button>
                <span class="ml-[2px] h-full w-[9px] bg-[#ece9d8]"></span>
              </div>
            </div>
          </div>
        </div>
        <div class="mt-[2px] h-[3px] border-t border-b border-t-white border-b-[#aca899]"></div>
      </section>

      <!-- Status bar -->
      <footer class="flex h-[19px] shrink-0 items-center border-t border-[#aca899] pl-[5px]">
        <output class="h-[18px] w-[238px] border border-[#aca899] border-r-white border-b-white pl-px text-[11px] leading-[17px]">254.2075, -30.9618, 0.0000</output>
        <div class="ml-[4px] flex gap-[4px] text-[12px] leading-[17px] [&>button]:h-[18px] [&>button]:border [&>button]:text-center [&>button]:whitespace-nowrap">
          <button class="w-[40px] border-white border-r-[#aca899] border-b-[#aca899]">FORZC</button>
          <button class="w-[46px] border-white border-r-[#aca899] border-b-[#aca899]">REJILLA</button>
          <button class="w-[35px] border-white border-r-[#aca899] border-b-[#aca899]">ORTO</button>
          <button class="w-[40px] border-white border-r-[#aca899] border-b-[#aca899]">POLAR</button>
          <button class="w-[47px] border-black border-r-white border-b-white pt-px" aria-pressed="true">REFENT</button>
          <button class="w-[56px] border-black border-r-white border-b-white pt-px" aria-pressed="true">RASTREO</button>
          <button class="w-[23px] border-black border-r-white border-b-white pt-px" aria-pressed="true">DIN</button>
          <button class="w-[26px] border-white border-r-[#aca899] border-b-[#aca899]">GLN</button>
          <button class="w-[50px] border-black border-r-white border-b-white pt-px" aria-pressed="true">MODELO</button>
        </div>
        <div class="relative ml-auto flex items-center">
          <div class="flex h-[18px] w-[45px] items-center gap-[3px] border border-[#aca899] border-r-white border-b-white pl-[3px]">
            <button aria-label="Centro de comunicaciones"><svg class="size-4"><use href="#comm"/></svg></button>
            <button aria-label="Bloqueo de barras"><svg class="size-4"><use href="#padlock"/></svg></button>
          </div>
          <button aria-label="Menú de la barra de estado" class="mx-[4px] mt-[5px]"><svg class="h-[8px] w-[8px]"><use href="#tri"/></svg></button>
          <svg class="ml-[2px] size-[14px]" viewBox="0 0 14 14"><path d="M10 2h2v2h-2zM6 6h2v2H6zM10 6h2v2h-2zM2 10h2v2H2zM6 10h2v2H6zM10 10h2v2h-2z" fill="#b8b4a2"/></svg>
          <svg class="absolute top-[3px] left-[36px] z-10 h-[20px] w-[13px]" viewBox="0 0 13 20"><path d="M.5.500v16l4-4 3 7 2.500-1-3-7h5.500z" fill="#fff" stroke="#000"/></svg>
        </div>
      </footer>
    </div>
  </div>
</body>
</html>
